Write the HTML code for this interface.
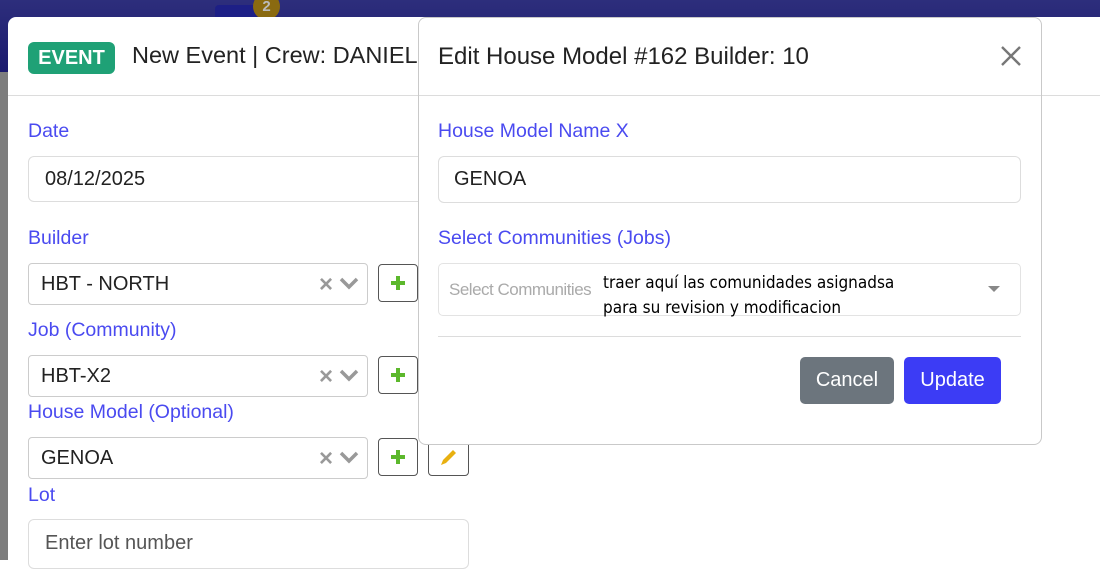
<!DOCTYPE html>
<html><head><meta charset="utf-8"><style>
*{box-sizing:border-box;margin:0;padding:0}
body{width:1100px;height:560px;overflow:hidden;position:relative;background:#fff;font-family:"Liberation Sans",sans-serif}
.top{position:absolute;left:0;top:0;width:1100px;height:72px;background:linear-gradient(#2d2e7c,#1b1a6e)}
.strip{position:absolute;left:0;top:72px;width:10px;height:488px;background:#7d7d7d}
.badge2{position:absolute;left:253px;top:-7px;width:27px;height:27px;border-radius:50%;background:#8a6a10;color:#bbb;font-size:15px;font-weight:bold;text-align:center;line-height:27px}
.navbtn{position:absolute;left:215px;top:5px;width:45px;height:20px;background:#1d1f86;border-radius:4px}
.m1{position:absolute;left:8px;top:17px;width:1100px;height:560px;background:#fff;border-radius:8px 0 0 0}
.hdr{position:absolute;left:8px;top:95px;width:1092px;height:1px;background:#dcdcdc}
.ev{position:absolute;left:28px;top:42px;width:87px;height:32px;background:#1fa176;border-radius:6px;color:#fff;font-weight:bold;font-size:20px;text-align:center;line-height:32px}
.t1{position:absolute;left:132px;top:42px;font-size:23.5px;color:#222;white-space:nowrap}
.lbl{position:absolute;left:28px;font-size:19.5px;color:#4a4af0}
.inp{position:absolute;left:28px;border:1px solid #ddd;border-radius:6px;background:#fff;font-size:20px;color:#222;padding-left:16px}
.sel{position:absolute;left:28px;width:340px;height:42px;border:1px solid #ccc;border-radius:4px;font-size:20px;color:#222;padding-left:12px;line-height:40px}
.sel .x{position:absolute;right:34px;top:1px;color:#999;font-size:24px;font-weight:bold}
.sel svg{position:absolute;right:8px;top:13px}
.pb{position:absolute;left:378px;width:40px;height:38px;border:1px solid #555;border-radius:4px}
.m2{position:absolute;left:418px;top:17px;width:624px;height:428px;background:#fff;border:1px solid #c9c9c9;border-radius:8px}
</style></head><body>
<div class="top"></div>
<div class="navbtn"></div>
<div class="badge2">2</div>
<div class="strip"></div>
<div class="m1"></div>
<div class="hdr"></div>
<div class="ev">EVENT</div>
<div class="t1">New Event | Crew: DANIEL</div>
<div class="lbl" style="top:120px">Date</div>
<div class="inp" style="top:156px;width:440px;height:46px;line-height:44px">08/12/2025</div>
<div class="lbl" style="top:227px">Builder</div>
<div class="sel" style="top:263px">HBT - NORTH<span class="x">×</span><svg width="20" height="14"><path d="M2 2l8 8 8-8" stroke="#999" stroke-width="3.5" fill="none"/></svg></div>
<div class="pb" style="top:264px"><svg width="38" height="36"><path d="M19 11v14M12 18h14" stroke="#5cb82c" stroke-width="4"/></svg></div>
<div class="lbl" style="top:319px">Job (Community)</div>
<div class="sel" style="top:355px">HBT-X2<span class="x">×</span><svg width="20" height="14"><path d="M2 2l8 8 8-8" stroke="#999" stroke-width="3.5" fill="none"/></svg></div>
<div class="pb" style="top:356px"><svg width="38" height="36"><path d="M19 11v14M12 18h14" stroke="#5cb82c" stroke-width="4"/></svg></div>
<div class="lbl" style="top:401px">House Model (Optional)</div>
<div class="sel" style="top:437px">GENOA<span class="x">×</span><svg width="20" height="14"><path d="M2 2l8 8 8-8" stroke="#999" stroke-width="3.5" fill="none"/></svg></div>
<div class="pb" style="top:438px"><svg width="38" height="36"><path d="M19 11v14M12 18h14" stroke="#5cb82c" stroke-width="4"/></svg></div>
<div style="position:absolute;left:428px;top:438px;width:41px;height:38px;border:1px solid #555;border-radius:4px"><svg width="41" height="38"><path d="M12 26l2-5 10-10 3 3-10 10z" fill="#e8b010"/></svg></div>
<div class="lbl" style="top:484px">Lot</div>
<div class="inp" style="top:519px;width:441px;height:50px;line-height:46px;color:#555">Enter lot number</div>

<div class="m2">
  <div style="position:absolute;left:19px;top:25px;font-size:24px;color:#222">Edit House Model #162 Builder: 10</div>
  <svg style="position:absolute;left:580px;top:26px" width="24" height="24"><path d="M3 3l18 18M21 3L3 21" stroke="#777" stroke-width="2.4"/></svg>
  <div style="position:absolute;left:0;top:77px;width:622px;height:1px;background:#dcdcdc"></div>
  <div style="position:absolute;left:19px;top:102px;font-size:19.5px;color:#4a4af0">House Model Name X</div>
  <div style="position:absolute;left:19px;top:138px;width:583px;height:47px;border:1px solid #ddd;border-radius:6px;font-size:20px;color:#222;padding-left:15px;line-height:45px">GENOA</div>
  <div style="position:absolute;left:19px;top:209px;font-size:19.5px;color:#4a4af0">Select Communities (Jobs)</div>
  <div style="position:absolute;left:19px;top:245px;width:583px;height:53px;border:1px solid #e3e3e3;border-radius:5px">
    <span style="position:absolute;left:10px;top:16px;font-size:17px;color:#aaa;letter-spacing:-0.5px">Select Communities</span>
    <svg style="position:absolute;right:20px;top:22px" width="12" height="8"><path d="M0 0h12L6 6z" fill="#888"/></svg>
  </div>
  <div style="position:absolute;left:184px;top:253px;font-size:17px;color:#000;line-height:25px;font-family:'DejaVu Sans Condensed','DejaVu Sans',sans-serif;font-weight:500">traer aquí las comunidades asignadsa<br>para su revision y modificacion</div>
  <div style="position:absolute;left:19px;top:318px;width:583px;height:1px;background:#dcdcdc"></div>
  <div style="position:absolute;left:381px;top:339px;width:94px;height:47px;background:#6c757d;border-radius:5px;color:#fff;font-size:20px;text-align:center;line-height:47px">Cancel</div>
  <div style="position:absolute;left:485px;top:339px;width:97px;height:47px;background:#3c3cf5;border-radius:5px;color:#fff;font-size:20px;text-align:center;line-height:47px">Update</div>
</div>
</body></html>
